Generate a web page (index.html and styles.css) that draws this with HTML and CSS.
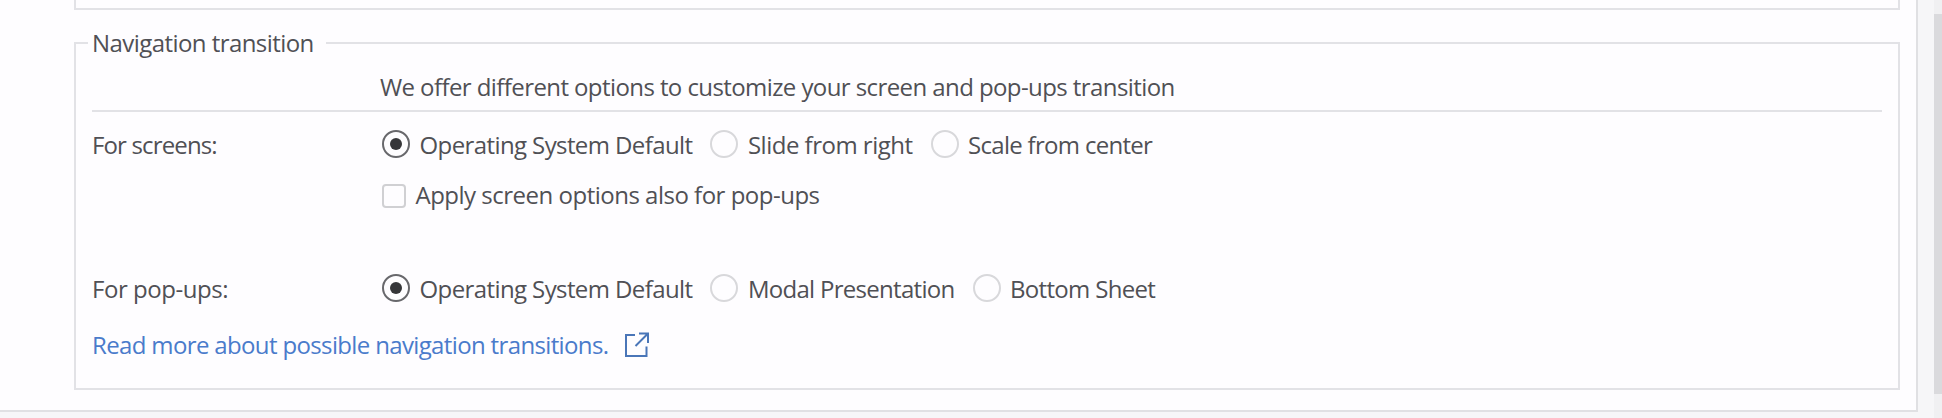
FILE: index.html
```html
<!DOCTYPE html>
<html lang="en">
<head>
<meta charset="utf-8">
<title>Navigation transition</title>
<link rel="stylesheet" href="styles.css">
</head>
<body>
<div class="window">
  <main class="panel">
    <section class="group group-previous"></section>
    <fieldset class="group group-transition">
      <legend class="legend">Navigation transition</legend>
      <div class="intro"><span class="intro-text">We offer different options to customize your screen and pop-ups transition</span></div>
      <div class="row row-screens">
        <span class="row-label label-screens">For screens:</span>
        <div class="options">
          <label class="option"><span class="radio radio-on"></span><span class="name-default">Operating System Default</span></label>
          <label class="option"><span class="radio"></span><span class="name-slide">Slide from right</span></label>
          <label class="option"><span class="radio"></span><span class="name-scale">Scale from center</span></label>
        </div>
      </div>
      <div class="row row-apply">
        <label class="option"><span class="checkbox"></span><span class="name-apply">Apply screen options also for pop-ups</span></label>
      </div>
      <div class="row row-popups">
        <span class="row-label label-popups">For pop-ups:</span>
        <div class="options">
          <label class="option"><span class="radio radio-on"></span><span class="name-default">Operating System Default</span></label>
          <label class="option"><span class="radio"></span><span class="name-modal">Modal Presentation</span></label>
          <label class="option"><span class="radio"></span><span class="name-sheet">Bottom Sheet</span></label>
        </div>
      </div>
      <a class="link"><span class="link-text">Read more about possible navigation transitions.</span><svg class="link-icon" width="26" height="26" viewBox="0 0 26 26"><path d="M11 3H2V24H22.5V14.5M11.5 14L23.5 2M15 1.5H24V11"/></svg></a>
    </fieldset>
  </main>
  <div class="scrollbar"><div class="thumb"></div></div>
</div>
</body>
</html>
```
FILE: styles.css
```css
* { box-sizing: border-box; }

body {
  margin: 0;
  background: #f6f6f8;
  color: #505055;
  font: 24px/32px "Open Sans", "Noto Sans", sans-serif;
  overflow: hidden;
}

.window {
  display: flex;
  justify-content: space-between;
  height: 418px;
}

.panel {
  width: 1918px;
  height: 412px;
  padding-left: 74px;
  background: #fefdff;
  border: solid #e0e0e3;
  border-width: 0 2px 2px 0;
}

.group {
  width: 1826px;
  margin: 0;
  border: 2px solid #e2e2e6;
}

.group-previous {
  height: 10px;
  border-top: 0;
}

.group-transition {
  height: 363px;
  margin-top: 17px;
  padding: 0 16px;
}

.legend {
  height: 32px;
  margin-left: -4px;
  padding: 0 12px 0 4px;
  letter-spacing: -0.56px;
}

.intro {
  height: 53px;
  padding: 12px 0 0 288px;
  border-bottom: 2px solid #e2e2e6;
}

.intro-text { letter-spacing: -0.585px; white-space: nowrap; }

.row { display: flex; height: 32px; white-space: nowrap; }
.row-screens { margin-top: 17px; }
.row-apply { margin-top: 18px; padding-left: 290px; }
.row-popups { margin-top: 62px; }
.row-label { width: 290px; }
.label-screens { letter-spacing: -0.85px; }
.label-popups { letter-spacing: -0.45px; }

.options { display: flex; gap: 18px; }
.option { display: flex; gap: 9.5px; }

.radio {
  display: flex;
  width: 28px;
  height: 28px;
  margin-top: 1px;
  border: 2px solid #d8d8db;
  border-radius: 50%;
  align-items: center;
  justify-content: center;
}

.radio-on { border-color: #68686c; }
.radio-on::before {
  content: "";
  width: 12px;
  height: 12px;
  border-radius: 50%;
  background: #363639;
}

.checkbox {
  width: 24px;
  height: 24px;
  margin-top: 5px;
  border: 2px solid #d0d0d3;
  border-radius: 4px;
}

.name-default { letter-spacing: -0.6px; }
.name-slide { letter-spacing: -0.5px; }
.name-scale { letter-spacing: -0.7px; }
.name-apply { letter-spacing: -0.5px; }
.name-modal { letter-spacing: -0.71px; }
.name-sheet { letter-spacing: -0.68px; }

.link {
  display: flex;
  gap: 16px;
  height: 32px;
  margin-top: 24px;
  color: #4a7bcb;
}

.link-text { letter-spacing: -0.64px; }
.link-icon { margin-top: 3px; fill: none; stroke: #4a76b8; stroke-width: 2; }

.scrollbar {
  width: 8px;
  padding-top: 14px;
  background: #f0f0f2;
}

.thumb { height: 380px; background: #dadadd; }
```
